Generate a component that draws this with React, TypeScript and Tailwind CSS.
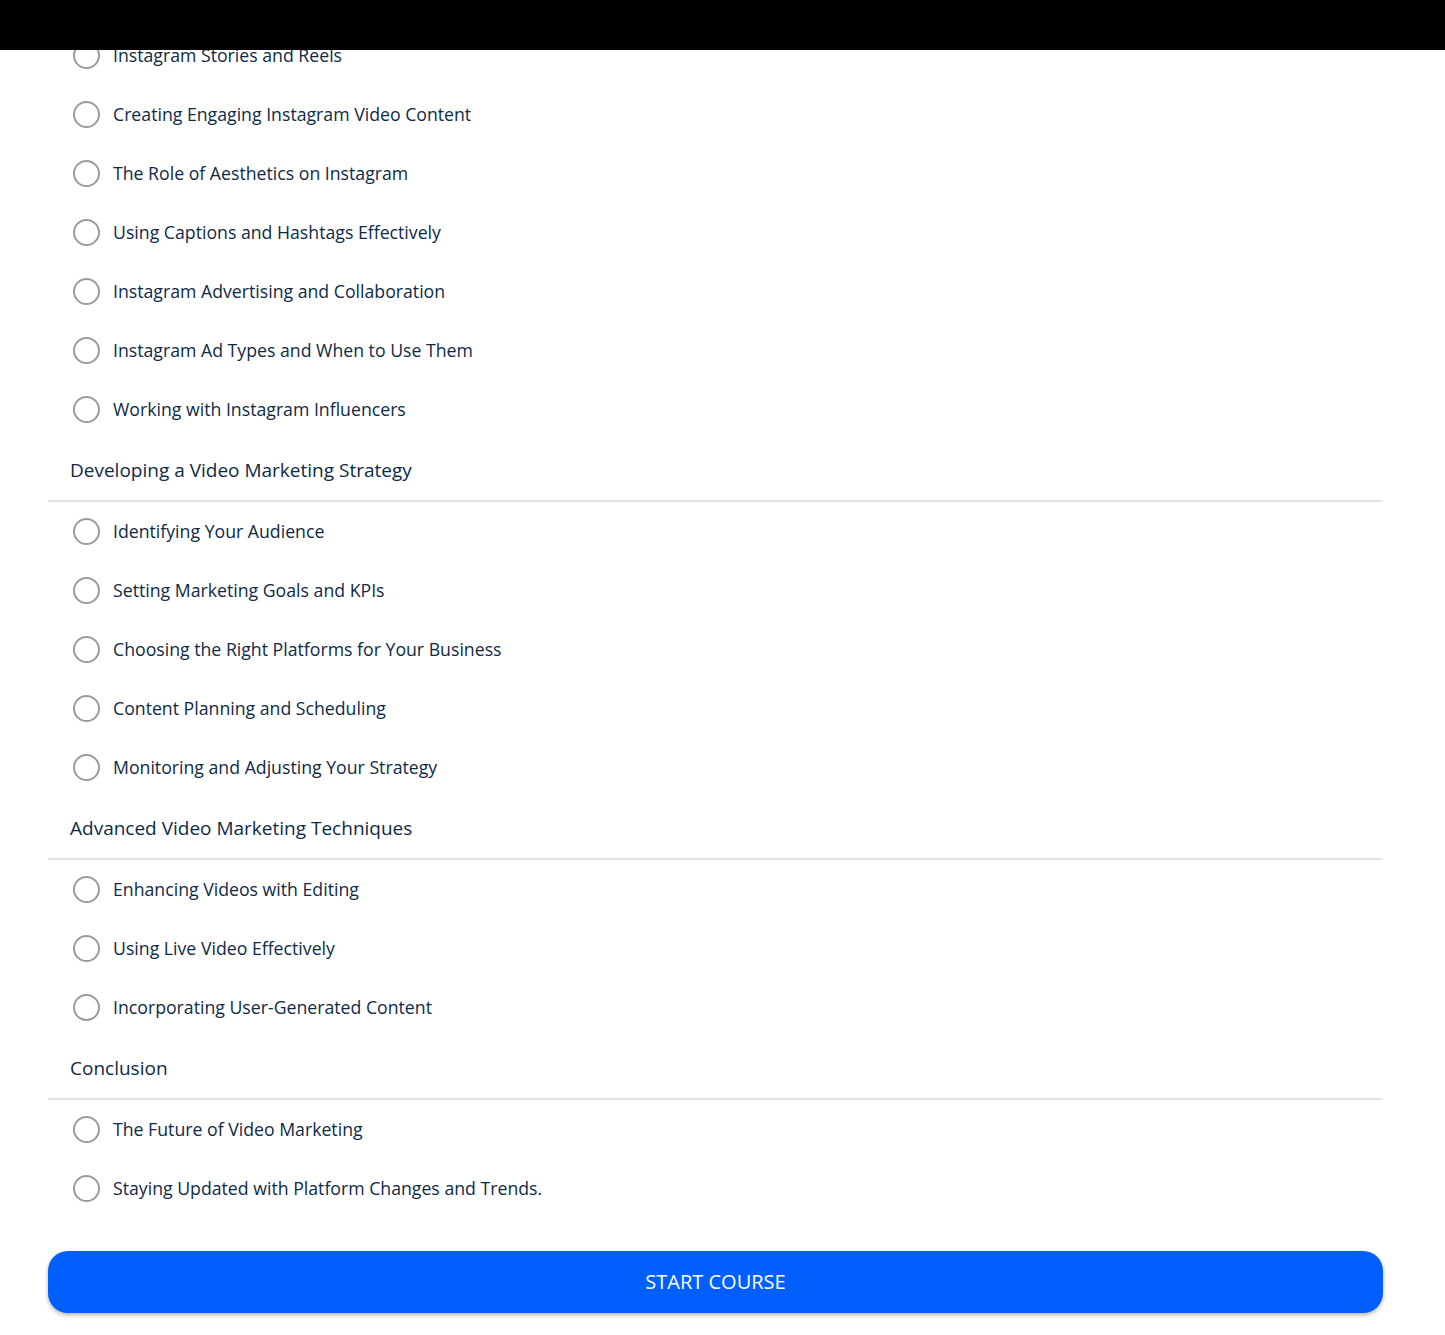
const sections: { title?: string; lessons: string[] }[] = [
  {
    lessons: [
      "Instagram Stories and Reels",
      "Creating Engaging Instagram Video Content",
      "The Role of Aesthetics on Instagram",
      "Using Captions and Hashtags Effectively",
      "Instagram Advertising and Collaboration",
      "Instagram Ad Types and When to Use Them",
      "Working with Instagram Influencers",
    ],
  },
  {
    title: "Developing a Video Marketing Strategy",
    lessons: [
      "Identifying Your Audience",
      "Setting Marketing Goals and KPIs",
      "Choosing the Right Platforms for Your Business",
      "Content Planning and Scheduling",
      "Monitoring and Adjusting Your Strategy",
    ],
  },
  {
    title: "Advanced Video Marketing Techniques",
    lessons: [
      "Enhancing Videos with Editing",
      "Using Live Video Effectively",
      "Incorporating User-Generated Content",
    ],
  },
  {
    title: "Conclusion",
    lessons: [
      "The Future of Video Marketing",
      "Staying Updated with Platform Changes and Trends.",
    ],
  },
]

function Lesson({ name }: { name: string }) {
  return (
    <div className="flex h-[59px] items-center pl-[25px]">
      <span className="h-[27px] w-[27px] shrink-0 rounded-full border-[2.5px] border-[#9b9b9b]" />
      <span className="ml-[13px] text-[17.7px] text-[#0e2a47]">{name}</span>
    </div>
  )
}

export default function App() {
  return (
    <div
      className="relative h-[1335px] overflow-hidden bg-white"
      style={{ fontFamily: '"Open Sans", "Noto Sans", sans-serif' }}
    >
      <div className="absolute inset-x-0 top-0 z-10 h-[50px] bg-black" />
      <div className="ml-[48px] mr-[62px] pt-[26px]">
        {sections.map((section, i) => (
          <div key={i}>
            {section.title && (
              <div className="flex h-[63px] items-center border-b-2 border-[#e3e3e3] pl-[22px] pt-[1px] text-[19px] text-[#0e2a47]">
                {section.title}
              </div>
            )}
            {section.lessons.map((lesson) => (
              <Lesson key={lesson} name={lesson} />
            ))}
          </div>
        ))}
        <button className="mt-[33px] flex h-[62px] w-full items-center justify-center rounded-[20px] bg-[#005ffe] text-[20px] text-white shadow-[0_2px_4px_rgba(0,0,0,0.3)]">
          START COURSE
        </button>
      </div>
    </div>
  )
}
